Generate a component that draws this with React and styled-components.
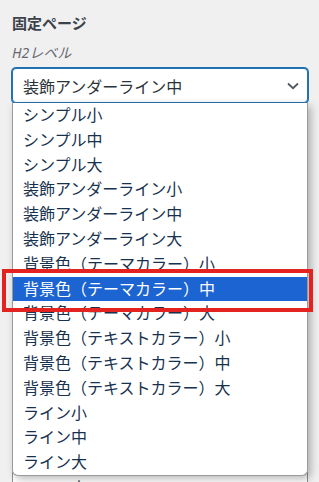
import React from "react";
import styled, { createGlobalStyle } from "styled-components";

const GlobalStyle = createGlobalStyle`
  html, body {
    margin: 0;
    padding: 0;
    background: #f0f0f1;
    overflow: hidden;
  }
  body {
    font-family: "Noto Sans", "Noto Sans CJK JP", sans-serif;
  }
`;

const options = [
  "シンプル小",
  "シンプル中",
  "シンプル大",
  "装飾アンダーライン小",
  "装飾アンダーライン中",
  "装飾アンダーライン大",
  "背景色（テーマカラー）小",
  "背景色（テーマカラー）中",
  "背景色（テーマカラー）大",
  "背景色（テキストカラー）小",
  "背景色（テキストカラー）中",
  "背景色（テキストカラー）大",
  "ライン小",
  "ライン中",
  "ライン大",
];

// fields hidden behind the open list
const hiddenFields = [
  { label: "H3レベル", value: "シンプル中" },
  { label: "H4レベル", value: "シンプル小" },
  { label: "H2レベル", value: "装飾アンダーライン中", gap: 31 },
  { label: "H3レベル", value: "シンプル中" },
  { label: "H4レベル", value: "ライン中" },
];

const SELECTED = 7;

const Chevron = () => (
  <svg width="12" height="8" viewBox="0 0 12 8">
    <path d="M1 1.5 L6 6.2 L11 1.5" fill="none" stroke="#50575e" strokeWidth="1.8" />
  </svg>
);

const App = () => {
  return (
    <Page>
      <GlobalStyle />
      <Title>固定ページ</Title>
      <Field>
        <Label>H2レベル</Label>
        <SelectWrap>
          <SelectBox $focused>
            <SelectText>装飾アンダーライン中</SelectText>
            <Chevron />
          </SelectBox>
          <OptionList>
            {options.map((opt, i) => (
              <OptionItem key={opt} $active={i === SELECTED}>
                {opt}
              </OptionItem>
            ))}
          </OptionList>
        </SelectWrap>
      </Field>
      {hiddenFields.map((f, i) => (
        <Field key={i} $gap={f.gap}>
          <Label>{f.label}</Label>
          <SelectBox>
            <SelectText>{f.value}</SelectText>
            <Chevron />
          </SelectBox>
        </Field>
      ))}
      <Marker />
    </Page>
  );
};

export default App;

const Page = styled.div`
  position: relative;
  padding: 12px 11px 0 12px;
  height: 482px;
  box-sizing: border-box;
`;

const Title = styled.div`
  font-size: 15px;
  line-height: 22px;
  font-weight: 700;
  color: #3c434a;
`;

const Field = styled.div`
  display: flex;
  flex-direction: column;
  gap: 5px;
  margin-top: ${(p) => (p.$gap ? 14 + p.$gap : 14)}px;

  &:nth-of-type(2) {
    margin-top: 9px;
  }
`;

const Label = styled.div`
  font-size: 14px;
  line-height: 20px;
  font-style: italic;
  color: #646970;
`;

const SelectWrap = styled.div`
  position: relative;
  z-index: 2;
`;

const SelectBox = styled.div`
  height: 35px;
  box-sizing: border-box;
  display: flex;
  align-items: center;
  justify-content: space-between;
  padding: 0 8px 0 10px;
  background: #fff;
  border-radius: 4px;
  border: 1px solid ${(p) => (p.$focused ? "#2271b1" : "#8c8f94")};
  box-shadow: ${(p) => (p.$focused ? "0 0 0 1px #2271b1" : "none")};
`;

const SelectText = styled.span`
  font-size: 16px;
  color: #2c3338;
  white-space: nowrap;
`;

const OptionList = styled.div`
  position: absolute;
  top: 100%;
  left: 0;
  width: 294px;
  background: #fff;
  border: 1px solid #9a9a9a;
  border-top: none;
  border-radius: 0 0 6px 6px;
  box-shadow: 3px 3px 9px rgba(0, 0, 0, 0.28);
`;

const OptionItem = styled.div`
  height: 24.8px;
  line-height: 24.8px;
  padding-left: 10px;
  font-size: 16px;
  white-space: nowrap;
  color: ${(p) => (p.$active ? "#ffffff" : "#17324f")};
  background: ${(p) => (p.$active ? "#1c64d1" : "transparent")};
`;

const Marker = styled.div`
  position: absolute;
  left: 2px;
  top: 269px;
  width: 311px;
  height: 43px;
  box-sizing: border-box;
  border: 4px solid #e3231f;
  z-index: 3;
  pointer-events: none;
`;
